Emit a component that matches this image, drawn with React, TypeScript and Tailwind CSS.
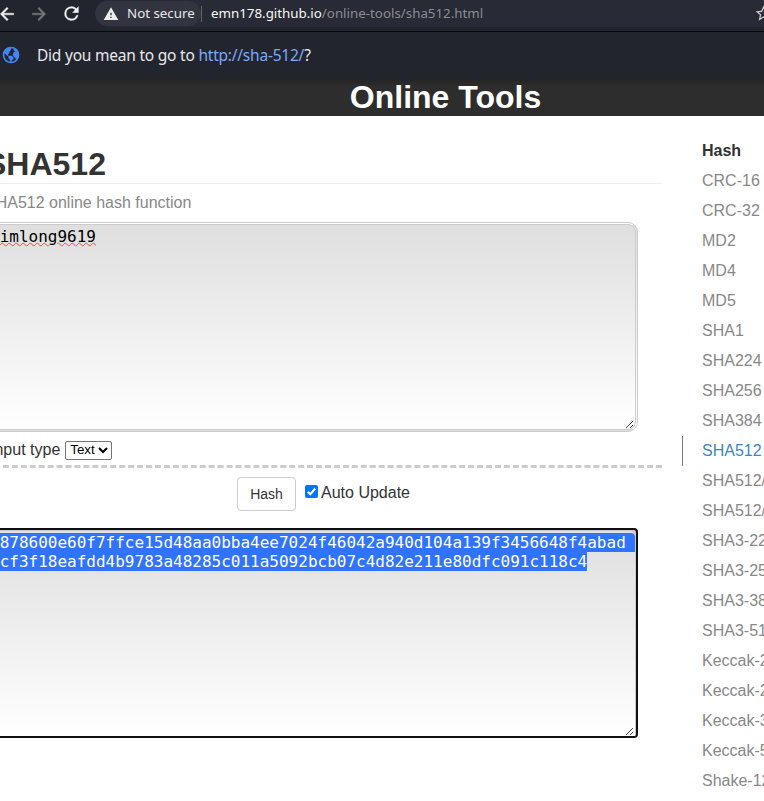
const methods = [
  'CRC-16', 'CRC-32', 'MD2', 'MD4', 'MD5', 'SHA1', 'SHA224', 'SHA256', 'SHA384', 'SHA512',
  'SHA512/224', 'SHA512/256', 'SHA3-224', 'SHA3-256', 'SHA3-384', 'SHA3-512',
  'Keccak-224', 'Keccak-256', 'Keccak-384', 'Keccak-512', 'Shake-128',
];

function Grip() {
  return (
    <svg className="absolute bottom-0 right-0" width="10" height="10" viewBox="0 0 10 10" stroke="#444" strokeWidth="1">
      <path d="M1 9 8 2M5 9 8 6" fill="none" />
    </svg>
  );
}

function Toolbar() {
  return (
    <div className="flex h-8 items-start border-b border-[#08090d] bg-[#23252e] font-['Noto_Sans',sans-serif]">
      <div className="flex h-[27px] w-[95px] shrink-0 items-center">
        <svg className="-ml-[3px] shrink-0" width="20" height="20" viewBox="0 0 24 24" fill="#f1f1f3" stroke="#f1f1f3" strokeWidth=".5"><path d="M20 11H7.830l5.590-5.590L12 4l-8 8 8 8 1.410-1.410L7.830 13H20z" /></svg>
        <svg className="ml-3 shrink-0" width="20" height="20" viewBox="0 0 24 24" fill="#77787e" stroke="#77787e" strokeWidth=".5"><path d="m12 4-1.410 1.410L16.170 11H4v2h12.170l-5.580 5.590L12 20l8-8z" /></svg>
        <svg className="ml-3 shrink-0" width="21" height="21" viewBox="0 0 24 24" fill="#f1f1f3" stroke="#f1f1f3" strokeWidth=".3"><path d="M17.650 6.350A7.958 7.958 0 0 0 12 4a8 8 0 1 0 7.730 10h-2.080A6 6 0 1 1 12 6c1.660 0 3.140.69 4.220 1.780L13 11h7V4z" /></svg>
      </div>
      <div className="flex h-[27px] grow items-center overflow-hidden rounded-l-full bg-[#282a36] text-[13.330px] leading-[26px]">
        <div className="flex h-[25px] w-[106px] shrink-0 items-center rounded-full bg-[#32343f] pl-2 text-[#e8e8ec]">
          <svg className="mr-[8px] shrink-0" width="16" height="16" viewBox="0 0 24 24" fill="#ececee"><path d="M1 21h22L12 2zm12-3h-2v-2h2zm0-4h-2v-4h2z" /></svg>
          <span className="-mt-px whitespace-nowrap">Not secure</span>
        </div>
        <div className="mr-[9px] h-4 w-px bg-[#62646e]" />
        <span className="-mt-px whitespace-nowrap text-[#f8f8f2]">emn178.github.io<span className="text-[#8b8c91]">/online-tools/sha512.html</span></span>
        <svg className="-mr-[9px] ml-auto shrink-0" width="19" height="19" viewBox="0 0 24 24" fill="#c9c9cc"><path d="m22 9.240-7.190-.62L12 2 9.190 8.630 2 9.240l5.460 4.730L5.820 21 12 17.270 18.180 21l-1.630-7.030zM12 15.400l-3.760 2.270 1-4.280-3.320-2.880 4.380-.38L12 6.100l1.710 4.040 4.380.38-3.320 2.880 1 4.280z" /></svg>
      </div>
    </div>
  );
}

function Infobar() {
  return (
    <div className="flex h-[47px] items-center bg-[#23252e] font-['Noto_Sans',sans-serif] text-[15.500px] tracking-[-0.22px] text-[#e8e8ec]">
      <svg className="-mt-px ml-px mr-4 shrink-0" width="20" height="20" viewBox="0 0 24 24" fill="#4285f4">
        <circle cx="12" cy="12" r="9" fill="none" stroke="#4285f4" strokeWidth="2" />
        <path d="M4 8.500 8 4l4-1v3l-2 2v2l-2 1 1 2h4l2 2v2l-2 1v3h-2v-3l-2-2v-2l-5-4zM15 4l3 1 3 5v5l-3 3-1-3h-1l-2-3 1-3 2-1-2-2z" />
      </svg>
      <p className="whitespace-nowrap">Did you mean to go to <a className="text-[#7baaf7]">http://sha-512/</a>?</p>
    </div>
  );
}

export default function App() {
  return (
    <div className="h-[801px] w-[764px] overflow-hidden bg-white font-['Liberation_Sans',sans-serif] text-base text-[#333]">
      <Toolbar />
      <Infobar />
      <header className="flex h-[37px] items-start justify-center bg-[#2d2d2d] bg-linear-to-b from-[#242424] to-[#2d2d2d] to-20% pl-[127px] text-[32px] font-bold text-white">
        <h1 className="leading-[36px]">Online Tools</h1>
      </header>
      <div className="flex">
        <main className="-ml-[15px] w-[677px] shrink-0">
          <h2 className="mt-[29px] h-[39px] border-b border-[#eee] text-[32px] font-bold leading-[38px]">SHA512</h2>
          <p className="mt-[9px] h-[20px] leading-5 text-[#888]">SHA512 online hash function</p>
          <div className="relative mt-[9px] h-[210px] w-[653px] rounded-[10px] border-[3px] border-double border-[#ccc] bg-linear-to-b from-[#dfdfdf] to-white pl-0.5 pt-0.5 font-['DejaVu_Sans_Mono',monospace] leading-[19px] text-black">
            <span className="underline decoration-[#f44] decoration-wavy decoration-1 underline-offset-[0px]">kimlong9619</span>
            <Grip />
          </div>
          <div className="flex h-[36px] items-center border-b-[3px] border-dashed border-[#ccc] pl-[5px]">
            <label className="mr-[5px] mt-0.5">Input type</label>
            <span className="mt-[3px] flex h-[19px] w-[47px] items-center rounded-[2px] border border-[#767676] pl-1 text-[13.330px] text-black">
              Text
              <svg className="ml-[3px]" width="10" height="8" viewBox="0 0 10 8" fill="none" stroke="#000" strokeWidth="2"><path d="m1 2 4 4 4-4" /></svg>
            </span>
          </div>
          <div className="mt-[9px] flex h-[34px] justify-center">
            <button className="h-[34px] w-[59px] rounded border border-[#ccc] text-sm">Hash</button>
            <label className="ml-[9px] flex h-[32px] items-center">
              <svg className="mr-[3px] -mt-[3px]" width="13" height="13" viewBox="0 0 13 13"><rect width="13" height="13" rx="2" fill="#0075ff" /><path d="m2.800 6.800 2.500 2.400L10.200 3.500" fill="none" stroke="#fff" strokeWidth="2" /></svg>
              Auto Update
            </label>
          </div>
          <div className="relative mt-[17px] h-[210px] w-[653px] overflow-hidden rounded-[4px] border-2 border-[#101010] bg-[#ccc]">
            <div className="relative h-full overflow-hidden rounded-tr-[6px] border-r border-t border-[#ccc] bg-linear-to-b from-[#dfdfdf] to-white pl-[3px] pt-[2px] font-['DejaVu_Sans_Mono',monospace] leading-[19px] text-white">
              <div className="h-[19px] whitespace-nowrap rounded-tr-[4px] bg-[#3073ff]">2878600e60f7ffce15d48aa0bba4ee7024f46042a940d104a139f3456648f4abad</div>
              <span className="block h-[19px] w-max bg-[#3073ff]">8cf3f18eafdd4b9783a48285c011a5092bcb07c4d82e211e80dfc091c118c4</span>
              <Grip />
            </div>
          </div>
        </main>
        <nav className="ml-5 mt-5 w-[200px] shrink-0">
          <div className="h-[30px] pl-5 font-bold leading-[30px]">Hash</div>
          {methods.map((name) => (
            <a key={name} className={name === 'SHA512' ? 'block h-[30px] border-l border-[#777] pl-[19px] leading-[30px] text-[#4183c4]' : 'block h-[30px] pl-5 leading-[30px] text-[#888]'}>{name}</a>
          ))}
        </nav>
      </div>
    </div>
  );
}
